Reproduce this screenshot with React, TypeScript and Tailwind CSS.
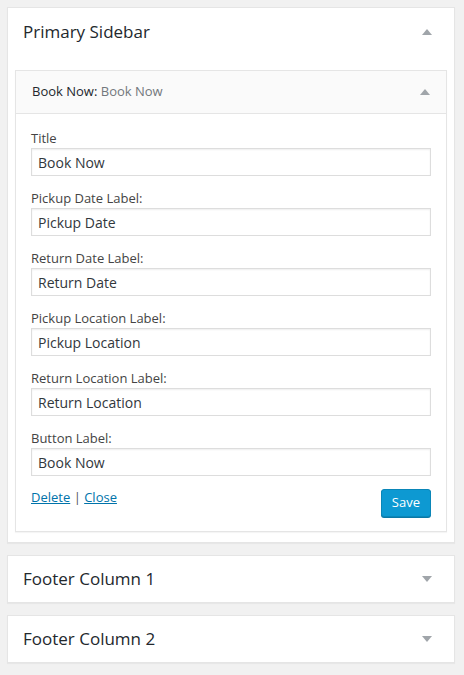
import React from 'react';

const font = { fontFamily: '"Open Sans", "Noto Sans", sans-serif' };

function Arrow({ up }: { up?: boolean }) {
  return (
    <svg width="10" height="6" viewBox="0 0 10 6" className="shrink-0" aria-hidden>
      {up ? <path d="M5 0 L10 6 L0 6 Z" fill="#a0a5aa" /> : <path d="M0 0 L10 0 L5 6 Z" fill="#a0a5aa" />}
    </svg>
  );
}

const fields = [
  ['Title', 'Book Now'],
  ['Pickup Date Label:', 'Pickup Date'],
  ['Return Date Label:', 'Return Date'],
  ['Pickup Location Label:', 'Pickup Location'],
  ['Return Location Label:', 'Return Location'],
  ['Button Label:', 'Book Now'],
];

function Field({ label, value }: { label: string; value: string }) {
  return (
    <div className="mb-[12px]">
      <div className="text-[13px] leading-[20px] text-[#444]">{label}</div>
      <div className="flex h-[28px] items-center border border-[#ddd] bg-white px-[6px] text-[14px] text-[#32373c] shadow-[inset_0_1px_2px_rgba(0,0,0,0.07)]">
        {value}
      </div>
    </div>
  );
}

function Sidebar({ title, open, children }: { title: string; open?: boolean; children?: React.ReactNode }) {
  return (
    <div className="border border-[#e5e5e5] bg-white shadow-[0_1px_1px_rgba(0,0,0,0.04)]">
      <div className={`flex items-center justify-between pl-[15px] pr-[22px] ${open ? 'h-[47px]' : 'h-[46px]'}`}>
        <h2 className="text-[17px] text-[#23282d]">{title}</h2>
        <Arrow up={open} />
      </div>
      {children}
    </div>
  );
}

export default function App() {
  return (
    <div style={font} className="min-h-[675px] w-[464px] bg-[#f1f1f1] pt-[7px] pl-[7px] pr-[9px]">
      <Sidebar title="Primary Sidebar" open>
        <div className="px-[7px] pt-[15px] pb-[10px]">
          <div className="border border-[#e5e5e5] bg-white shadow-[0_1px_1px_rgba(0,0,0,0.04)]">
            <div className="flex h-[43px] items-center justify-between border-b border-[#e5e5e5] bg-[#fafafa] pl-[16px] pr-[16px] text-[13px]">
              <div>
                <span className="text-[#23282d]">Book Now:</span>{' '}
                <span className="text-[#72777c]">Book Now</span>
              </div>
              <Arrow up />
            </div>
            <div className="px-[15px] pt-[14px] pb-[14px]">
              {fields.map(([l, v]) => (
                <Field key={l} label={l} value={v} />
              ))}
              <div className="flex items-start justify-between pt-[1px]">
                <div className="text-[13px] leading-[16px] text-[#0073aa]">
                  <a className="underline">Delete</a>
                  <span className="text-[#555]"> | </span>
                  <a className="underline">Close</a>
                </div>
                <button className="h-[28px] rounded-[3px] border border-[#0a86b8] bg-[#0d99d2] px-[10px] text-[13px] text-white shadow-[0_1px_0_#0a78a6]">
                  Save
                </button>
              </div>
            </div>
          </div>
        </div>
      </Sidebar>
      <div className="mt-[12px]">
        <Sidebar title="Footer Column 1" />
      </div>
      <div className="mt-[12px]">
        <Sidebar title="Footer Column 2" />
      </div>
    </div>
  );
}
